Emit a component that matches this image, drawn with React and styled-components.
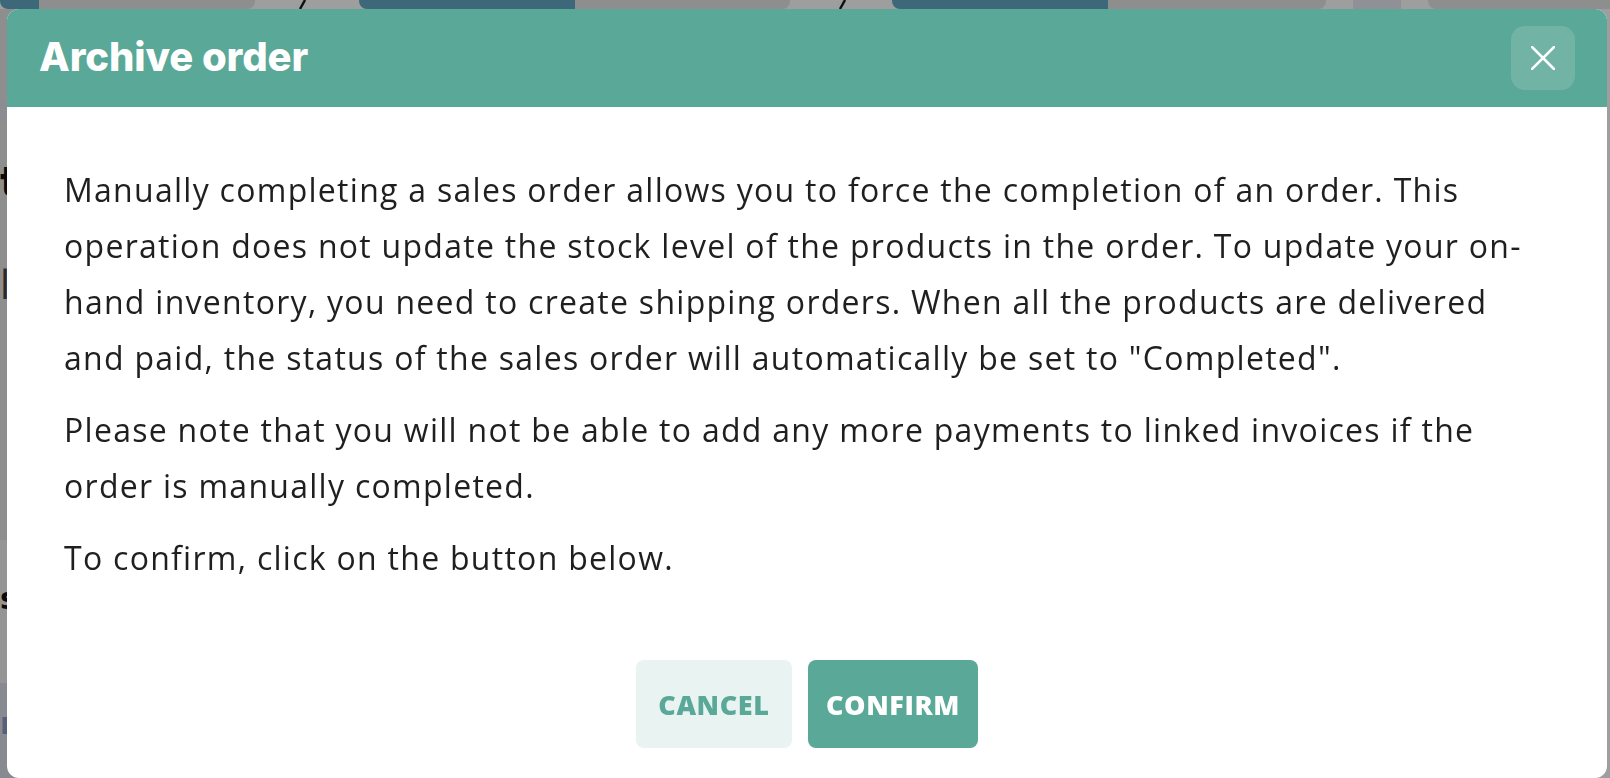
import React from 'react';
import styled, { createGlobalStyle } from 'styled-components';

const GlobalStyle = createGlobalStyle`
  html, body {
    margin: 0;
    padding: 0;
    height: 100%;
    overflow: hidden;
    background: #9e9e9e;
  }
`;

const Page = styled.div`
  height: 100vh;
  display: flex;
  flex-direction: column;
  font-family: 'Open Sans', 'Noto Sans', sans-serif;
`;

const StepsRow = styled.div`
  display: flex;
  align-items: flex-end;
  flex: 0 0 9px;
`;

const Step = styled.div`
  flex: 0 0 ${(p) => p.$width}px;
  margin-left: ${(p) => p.$offset || 0}px;
  height: 9px;
  border-radius: 0 0 8px 8px;
  background: linear-gradient(
    to right,
    #3d6879 0,
    #3d6879 ${(p) => p.$fill}px,
    #8e8e8e ${(p) => p.$fill}px
  );
`;

const StepBox = styled.div`
  flex: 0 0 48px;
  margin-left: 27px;
  height: 9px;
  background: #8f9196;
`;

const Chevron = styled.div`
  flex: 0 0 8px;
  margin-left: ${(p) => p.$offset}px;
  height: 9px;
  display: flex;
  align-items: flex-start;
`;

const SideColumn = styled.div`
  flex: 1;
  display: flex;
  flex-direction: column;
  width: 60px;
`;

const SideBlock = styled.div`
  flex: 0 0 ${(p) => p.$height}px;
  display: flex;
  flex-direction: column;
  background: ${(p) => p.$bg};
`;

const SideText = styled.div`
  font-family: ${(p) => (p.$bold ? "'DejaVu Sans'" : "'Open Sans'")}, sans-serif;
  font-weight: ${(p) => (p.$bold ? 700 : 400)};
  font-size: ${(p) => p.$size || 40}px;
  line-height: 1;
  color: ${(p) => p.$color || '#0a0a0a'};
  margin-top: ${(p) => p.$top}px;
`;

const Overlay = styled.div`
  position: fixed;
  inset: 0;
  display: flex;
  padding: 9px 3px 0 7px;
`;

const Modal = styled.div`
  flex: 1;
  display: flex;
  flex-direction: column;
  background: #ffffff;
  border-radius: 12px;
  overflow: hidden;
  font-family: 'Open Sans', 'Noto Sans', sans-serif;
`;

const Header = styled.div`
  flex: 0 0 98px;
  display: flex;
  align-items: center;
  justify-content: space-between;
  padding: 0 32px;
  background: #5aa898;
`;

const Title = styled.h2`
  margin: 0 0 3px;
  font-family: 'Inter', 'Noto Sans', sans-serif;
  font-weight: 800;
  font-size: 40px;
  letter-spacing: -0.1px;
  color: #ffffff;
`;

const CloseButton = styled.button`
  width: 64px;
  height: 64px;
  display: flex;
  align-items: center;
  justify-content: center;
  padding: 0;
  border: none;
  border-radius: 14px;
  background: rgba(255, 255, 255, 0.14);
  cursor: pointer;
`;

const Body = styled.div`
  flex: 1;
  display: flex;
  flex-direction: column;
  padding: 55px 57px 30px;
`;

const Paragraph = styled.p`
  margin: 0 0 16px;
  font-size: 32px;
  line-height: 56px;
  letter-spacing: 1.28px;
  color: #1f1f1f;
  white-space: nowrap;
`;

const Actions = styled.div`
  margin-top: auto;
  display: flex;
  justify-content: center;
  gap: 16px;
`;

const ActionButton = styled.button`
  height: 88px;
  min-width: ${(p) => p.$minWidth}px;
  padding: 0 18px;
  border: none;
  border-radius: 8px;
  font-family: 'Open Sans', 'Noto Sans', sans-serif;
  font-weight: 800;
  font-size: 27px;
  letter-spacing: 0.6px;
  cursor: pointer;
  background: ${(p) => (p.$primary ? '#5aa898' : '#e9f3f1')};
  color: ${(p) => (p.$primary ? '#ffffff' : '#5aa898')};
`;

const CloseIcon = () => (
  <svg width="24" height="24" viewBox="0 0 24 24" fill="none">
    <path d="M1 1L23 23M23 1L1 23" stroke="#ffffff" strokeWidth="2.6" strokeLinecap="square" />
  </svg>
);

const ChevronMark = () => (
  <svg width="8" height="9" viewBox="0 0 8 9">
    <path d="M7 0L2 9" stroke="#111" strokeWidth="2.4" />
  </svg>
);

export default function App() {
  return (
    <>
      <GlobalStyle />
      <Page>
        <StepsRow>
          <Step $width={255} $fill={39} />
          <Chevron $offset={43}>
            <ChevronMark />
          </Chevron>
          <Step $width={431} $fill={216} $offset={53} />
          <Chevron $offset={48}>
            <ChevronMark />
          </Chevron>
          <Step $width={434} $fill={216} $offset={46} />
          <StepBox />
          <Step $width={200} $fill={0} $offset={27} />
        </StepsRow>
        <SideColumn>
          <SideBlock $height={91} $bg="#8e8e8e" />
          <SideBlock $height={22} $bg="#8b8d93" />
          <SideBlock $height={418} $bg="#8e8e8e">
            <SideText $bold $top={40}>t</SideText>
            <SideText $top={62} $color="#2a2a2a">l</SideText>
          </SideBlock>
          <SideBlock $height={143} $bg="#959595">
            <SideText $bold $size={30} $top={44}>s</SideText>
          </SideBlock>
          <SideBlock $height={95} $bg="#888a92">
            <SideText $bold $size={30} $top={26} $color="#55607a">n</SideText>
          </SideBlock>
        </SideColumn>
      </Page>
      <Overlay>
        <Modal role="dialog" aria-labelledby="archive-title">
          <Header>
            <Title id="archive-title">Archive order</Title>
            <CloseButton aria-label="Close">
              <CloseIcon />
            </CloseButton>
          </Header>
          <Body>
            <Paragraph>
              Manually completing a sales order allows you to force the completion of an order. This
              <br />
              operation does not update the stock level of the products in the order. To update your on-
              <br />
              hand inventory, you need to create shipping orders. When all the products are delivered
              <br />
              and paid, the status of the sales order will automatically be set to "Completed".
            </Paragraph>
            <Paragraph>
              Please note that you will not be able to add any more payments to linked invoices if the
              <br />
              order is manually completed.
            </Paragraph>
            <Paragraph>To confirm, click on the button below.</Paragraph>
            <Actions>
              <ActionButton $minWidth={156}>CANCEL</ActionButton>
              <ActionButton $minWidth={168} $primary>
                CONFIRM
              </ActionButton>
            </Actions>
          </Body>
        </Modal>
      </Overlay>
    </>
  );
}
